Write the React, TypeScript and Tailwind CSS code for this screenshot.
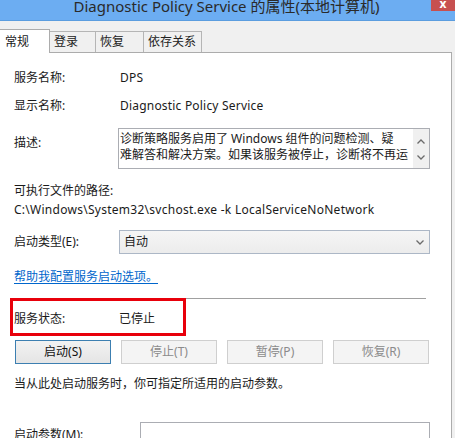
import React from "react";

const font = { fontFamily: '"Noto Sans", "Noto Sans CJK SC", sans-serif' };

function Chevron({ up, className }: { up?: boolean; className?: string }) {
    return (
        <svg width="8" height="5" viewBox="0 0 8 5" className={className}>
            <path
                d={up ? "M0.5 4.5 L4 1 L7.5 4.5" : "M0.5 0.5 L4 4 L7.5 0.5"}
                fill="none"
                stroke="#6b6b6b"
                strokeWidth="1.3"
            />
        </svg>
    );
}

function Tab({ label, active }: { label: string; active?: boolean }) {
    return active ? (
        <div className="h-[24px] px-[5px] flex items-center bg-white border-r border-t border-[#acacac] -mb-px relative z-10 w-[50px]">
            {label}
        </div>
    ) : (
        <div className="h-[21px] px-[4px] flex items-center bg-[#f0f0f0] border-r border-t border-[#b5b5b5] text-[#222]">
            {label}
        </div>
    );
}

function Button({ label, primary }: { label: string; primary?: boolean }) {
    return primary ? (
        <div className="w-[96px] h-[24px] flex items-center justify-center border border-[#3c7fb1] bg-gradient-to-b from-[#f2f2f2] to-[#e5e5e5] text-[#111]">
            {label}
        </div>
    ) : (
        <div className="w-[96px] h-[24px] flex items-center justify-center border border-[#cfcfcf] bg-[#f4f4f4] text-[#8b8b8b]">
            {label}
        </div>
    );
}

export default function App() {
    return (
        <div className="w-[455px] h-[438px] overflow-hidden bg-[#f0f0f0] text-[12px] text-[#1a1a1a] relative" style={font}>
            {/* title bar */}
            <div className="h-[21px] bg-[#6cadf2] border-b border-[#5b9ddf] relative flex justify-center overflow-hidden">
                <span className="text-[15px] leading-[15px] text-[#2a2a2a] -mt-[1px] pr-[2px]">
                    Diagnostic Policy Service 的属性(本地计算机)
                </span>
                <div className="absolute top-0 right-0 w-[24px] h-[11px] bg-[#c75050] flex justify-center">
                    <span className="text-white text-[12px] leading-[7px] font-bold">x</span>
                </div>
            </div>

            {/* tabs */}
            <div className="flex items-end mt-[8px] h-[23px]">
                <Tab label="常规" active />
                <div className="w-[46px]"><Tab label="登录" /></div>
                <div className="w-[48px]"><Tab label="恢复" /></div>
                <div className="w-[58px]"><Tab label="依存关系" /></div>
            </div>

            {/* panel */}
            <div className="w-[452px] h-[400px] bg-white border-t border-r border-[#acacac] flex flex-col pl-[14px] pr-[21px]">
                <div className="flex h-[22px] items-center mt-[14px]">
                    <span className="w-[106px]">服务名称:</span>
                    <span className="tracking-[0.2px]">DPS</span>
                </div>
                <div className="flex h-[22px] items-center mt-[6px]">
                    <span className="w-[106px]">显示名称:</span>
                    <span className="tracking-[0.2px]">Diagnostic Policy Service</span>
                </div>
                <div className="flex mt-[11px]">
                    <span className="w-[104px] mt-[7px] leading-[16px]">描述:</span>
                    <div className="flex-1 h-[41px] border border-[#abadb3] flex">
                        <div className="flex-1 pl-[1px] pt-[2px] leading-[16px] overflow-hidden">
                            诊断策略服务启用了 Windows 组件的问题检测、疑
                            <br />
                            难解答和解决方案。如果该服务被停止，诊断将不再运
                        </div>
                        <div className="w-[16px] bg-[#f0f0f0] flex flex-col items-center pt-[10px] gap-[11px]">
                            <Chevron up />
                            <Chevron />
                        </div>
                    </div>
                </div>
                <div className="h-[18px] flex items-center mt-[13px]">可执行文件的路径:</div>
                <div className="h-[18px] flex items-center mt-[1px] tracking-[0.27px]">
                    C:\Windows\System32\svchost.exe -k LocalServiceNoNetwork
                </div>
                <div className="flex items-center mt-[11px]">
                    <span className="w-[105px]">启动类型(E):</span>
                    <div className="flex-1 h-[24px] border border-[#acb7c6] bg-gradient-to-b from-[#f5f5f5] to-[#ececec] flex items-center pl-[4px] pr-[5px]">
                        <span className="flex-1">自动</span>
                        <Chevron />
                    </div>
                </div>
                <div className="h-[18px] flex items-center mt-[14px]">
                    <span className="text-[#0066cc] underline underline-offset-2">帮助我配置服务启动选项。</span>
                </div>
                <div className="h-px bg-[#a0a0a0] mt-[12px] mr-[4px]"></div>
                <div className="relative">
                    <div className="flex h-[18px] items-center mt-[11px]">
                        <span className="w-[105px]">服务状态:</span>
                        <span>已停止</span>
                    </div>
                    <div className="absolute -left-[4px] -top-[1px] w-[176px] h-[38px] border-[3px] border-[#e8000b]"></div>
                </div>
                <div className="flex mt-[12px] gap-[10px] pl-[1px]">
                    <Button label="启动(S)" primary />
                    <Button label="停止(T)" />
                    <Button label="暂停(P)" />
                    <Button label="恢复(R)" />
                </div>
                <div className="h-[18px] flex items-center mt-[11px]">
                    当从此处启动服务时，你可指定所适用的启动参数。
                </div>
                <div className="flex mt-[29px]">
                    <span className="w-[126px] mt-[4px]">启动参数(M):</span>
                    <div className="flex-1 h-[24px] border border-[#abadb3]"></div>
                </div>
            </div>
        </div>
    );
}
